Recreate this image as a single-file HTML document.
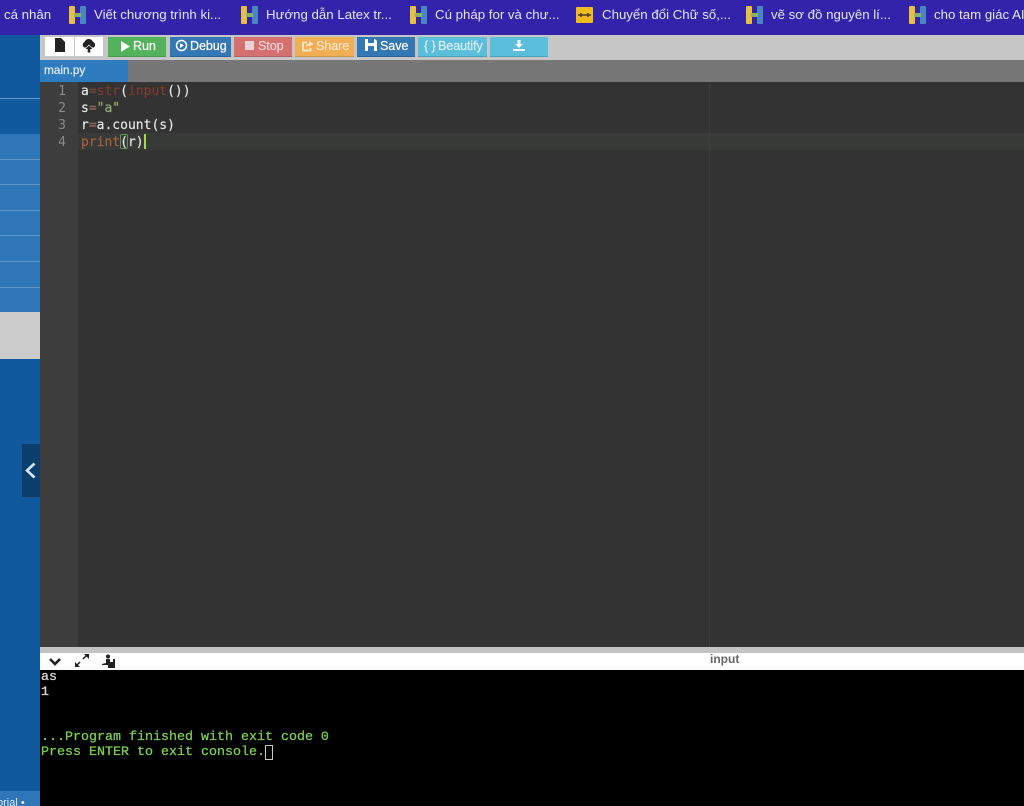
<!DOCTYPE html>
<html><head><meta charset="utf-8">
<style>
html,body{margin:0;padding:0;width:1024px;height:806px;overflow:hidden;background:#333;font-family:"Liberation Sans","Noto Sans CJK SC",sans-serif}
div,span,svg{position:absolute;box-sizing:border-box;white-space:nowrap}
#w{left:0;top:0;width:1024px;height:806px;overflow:hidden;filter:blur(.35px)}
.bm{top:6px;line-height:18px;color:#e6e4f6;font-family:"Liberation Sans",sans-serif;font-size:13.25px}
.btn{top:37px;height:20px;color:#fff;font-size:12.6px;line-height:18px;text-align:center;border-bottom:1px solid rgba(0,0,0,.15);letter-spacing:-.1px;-webkit-text-stroke:.2px currentColor}
.nav{left:0;width:40px;height:1px;background:#5c96cc}
.code{left:81px;font:13px/17px "DejaVu Sans Mono","Liberation Mono",monospace;color:#e8e8e8;-webkit-text-stroke:.15px currentColor}
.ln{left:40px;width:26px;text-align:right;font:13px/17px "DejaVu Sans Mono","Liberation Mono",monospace;color:#8a8a8a}
.con{left:41px;font:13.33px/15px "Liberation Mono",monospace;-webkit-text-stroke:.3px currentColor}
</style></head><body><div id="w">
<!-- bookmarks bar -->
<div style="left:0;top:0;width:1024px;height:35px;background:#3322aa"></div>
<span class="bm" style="left:4px">cá nhân</span>
<svg style="left:69px;top:6px" width="17" height="18" viewBox="0 0 17 18"><rect x="0" y="0" width="6" height="18" rx="1" fill="#e8c040"/><rect x="11" y="0" width="6" height="18" rx="1" fill="#4a86c0"/><rect x="5" y="7" width="7" height="4" fill="#8ab070"/></svg>
<span class="bm" style="left:94px">Viết chương trình ki...</span>
<svg style="left:241px;top:6px" width="17" height="18" viewBox="0 0 17 18"><rect x="0" y="0" width="6" height="18" rx="1" fill="#e8c040"/><rect x="11" y="0" width="6" height="18" rx="1" fill="#4a86c0"/><rect x="5" y="7" width="7" height="4" fill="#8ab070"/></svg>
<span class="bm" style="left:266px">Hướng dẫn Latex tr...</span>
<svg style="left:410px;top:6px" width="17" height="18" viewBox="0 0 17 18"><rect x="0" y="0" width="6" height="18" rx="1" fill="#e8c040"/><rect x="11" y="0" width="6" height="18" rx="1" fill="#4a86c0"/><rect x="5" y="7" width="7" height="4" fill="#8ab070"/></svg>
<span class="bm" style="left:435px">Cú pháp for và chư...</span>
<svg style="left:576px;top:7px" width="17" height="16" viewBox="0 0 17 16"><rect width="17" height="16" rx="1" fill="#f2bd1c"/><path d="M2 8h13M5 6v4M12 6v4" stroke="#4a3a20" stroke-width="1.6" fill="none"/></svg>
<span class="bm" style="left:602px">Chuyển đổi Chữ số,...</span>
<svg style="left:746px;top:6px" width="17" height="18" viewBox="0 0 17 18"><rect x="0" y="0" width="6" height="18" rx="1" fill="#e8c040"/><rect x="11" y="0" width="6" height="18" rx="1" fill="#4a86c0"/><rect x="5" y="7" width="7" height="4" fill="#8ab070"/></svg>
<span class="bm" style="left:771px">vẽ sơ đồ nguyên lí...</span>
<svg style="left:909px;top:6px" width="17" height="18" viewBox="0 0 17 18"><rect x="0" y="0" width="6" height="18" rx="1" fill="#e8c040"/><rect x="11" y="0" width="6" height="18" rx="1" fill="#4a86c0"/><rect x="5" y="7" width="7" height="4" fill="#8ab070"/></svg>
<span class="bm" style="left:934px">cho tam giác AI</span>

<!-- left sidebar -->
<div style="left:0;top:35px;width:40px;height:771px;background:#10599c"></div>
<div style="left:0;top:134px;width:40px;height:178px;background:#2f76b8"></div>
<div class="nav" style="top:98px"></div>
<div class="nav" style="top:159px"></div>
<div class="nav" style="top:184px"></div>
<div class="nav" style="top:210px"></div>
<div class="nav" style="top:235px"></div>
<div class="nav" style="top:261px"></div>
<div class="nav" style="top:287px"></div>
<div style="left:0;top:312px;width:40px;height:47px;background:#cbcbcb"></div>
<div style="left:22px;top:444px;width:18px;height:53px;background:#0d3f6e"></div>
<svg style="left:24px;top:462px" width="13" height="17" viewBox="0 0 13 17"><path d="M10.5 1.500L3 8.500l7.500 7" stroke="#d5e6f5" stroke-width="2.600" fill="none"/></svg>
<div style="left:0;top:791px;width:40px;height:15px;background:#2f76b8"></div>
<span style="left:-3px;top:797px;font-size:11px;line-height:12px;color:#dfeaf5">orial •</span>

<!-- toolbar -->
<div style="left:40px;top:35px;width:984px;height:25px;background:#c6c6c6"></div>
<div style="left:45px;top:37px;width:29px;height:19px;background:#fff"></div>
<div style="left:75px;top:37px;width:28px;height:19px;background:#fff"></div>
<svg style="left:55px;top:38px" width="10" height="14" viewBox="0 0 10 14"><path d="M0 0h6l4 4v10H0z" fill="#222"/></svg>
<svg style="left:82px;top:38px" width="14" height="15" viewBox="0 0 14 15"><path d="M2.500 9.500a3 3 0 0 1 0-5.500 4.500 4.500 0 0 1 8.500 0 3 3 0 0 1 .5 5.500H9.800L7 6.500 4.200 9.500z" fill="#222"/><path d="M7 7.500l3.500 3.500H8.300v3.500H5.700V11H3.500z" fill="#222"/></svg>
<div class="btn" style="left:108px;width:58px;background:#53b35c"><svg style="left:12px;top:4px" width="11" height="11" viewBox="0 0 11 11"><path d="M1 0l9 5.500-9 5.500z" fill="#fff"/></svg><span style="left:25px;top:0">Run</span></div>
<div class="btn" style="left:170px;width:61px;background:#3377b4"><svg style="left:5px;top:2px" width="13" height="13" viewBox="0 0 13 13"><circle cx="6.500" cy="6.500" r="5" stroke="#fff" stroke-width="1.500" fill="none"/><path d="M5 4l4 2.500L5 9z" fill="#fff"/></svg><span style="left:20px;top:0">Debug</span></div>
<div class="btn" style="left:234px;width:58px;background:#d47070;color:#f0d0d0"><div style="left:11px;top:4px;width:9px;height:9px;background:#ecd2d2"></div><span style="left:24px;top:0">Stop</span></div>
<div class="btn" style="left:295px;width:59px;background:#f0ae55;color:#fae3c4"><svg style="left:6px;top:3px" width="13" height="12" viewBox="0 0 13 12"><path d="M9.500 8v2.500H2v-8h4" stroke="#fae3c4" stroke-width="2" fill="none"/><path d="M8 1l4.500 3L8 7V5.500C6.500 5.500 5.500 6.500 5 8c0-3 1-4.500 3-4.500z" fill="#fae3c4"/></svg><span style="left:21px;top:0">Share</span></div>
<div class="btn" style="left:357px;width:58px;background:#3377b4"><svg style="left:8px;top:2px" width="12" height="12" viewBox="0 0 12 12"><path d="M0 0h3v4h6V0h1l2 2v10H0zM3 7v5h6V7z" fill="#fff"/></svg><span style="left:23px;top:0">Save</span></div>
<div class="btn" style="left:418px;width:69px;background:#5bbfdc;color:#d8eef6"><span style="left:6px;top:0">{ }</span><span style="left:20px;top:0">Beautify</span></div>
<div class="btn" style="left:490px;width:58px;background:#5bbfdc"><svg style="left:23px;top:3px" width="12" height="11" viewBox="0 0 12 11"><path d="M4.500 0h3v4H10L6 8 2 4h2.500zM0 9h12v2H0z" fill="#f2fafd"/></svg></div>

<!-- tab bar -->
<div style="left:40px;top:60px;width:984px;height:22px;background:#777"></div>
<div style="left:40px;top:60px;width:88px;height:22px;background:#2f7bc0"></div>
<span style="left:44px;top:63px;font-size:11.8px;line-height:14px;color:#e3eef8;-webkit-text-stroke:.2px currentColor">main.py</span>

<!-- editor -->
<div style="left:40px;top:82px;width:984px;height:565px;background:#333"></div>
<div style="left:40px;top:82px;width:38px;height:565px;background:#3d3d3d"></div>
<div style="left:78px;top:133px;width:946px;height:17px;background:#383a38"></div>
<div style="left:709px;top:82px;width:1px;height:565px;background:#3d3d3d"></div>
<span class="ln" style="top:83px">1</span>
<span class="ln" style="top:100px">2</span>
<span class="ln" style="top:117px">3</span>
<span class="ln" style="top:134px">4</span>
<span class="code" style="top:83px">a<span style="position:static;color:#6f4a40">=</span><span style="position:static;color:#7d3a30">str</span>(<span style="position:static;color:#7d3a30">input</span>())</span>
<span class="code" style="top:100px">s<span style="position:static;color:#8a6a60">=</span><span style="position:static;color:#9aae78">"a"</span></span>
<span class="code" style="top:117px">r<span style="position:static;color:#8a6a60">=</span>a.count(s)</span>
<span class="code" style="top:134px"><span style="position:static;color:#a8623c">print</span>(r)</span>
<div style="left:120px;top:134px;width:8px;height:15px;border:1px solid #5f8f5f;border-radius:2px"></div>
<div style="left:144px;top:134px;width:2px;height:15px;background:#a8d848"></div>

<!-- io bar -->
<div style="left:40px;top:647px;width:984px;height:6px;background:#c4c4c4"></div>
<div style="left:40px;top:653px;width:984px;height:17px;background:#fff"></div>
<svg style="left:48px;top:657px" width="14" height="10" viewBox="0 0 14 10"><path d="M2 2l5 5 5-5" stroke="#222" stroke-width="2.600" fill="none"/></svg>
<svg style="left:75px;top:654px" width="14" height="13" viewBox="0 0 14 13"><path d="M8 5l4-4M1 12l4-4" stroke="#222" stroke-width="1.500"/><path d="M9 0h5v5zM0 8v5h5z" fill="#222"/></svg>
<svg style="left:102px;top:654px" width="13" height="14" viewBox="0 0 13 14"><circle cx="6" cy="2.500" r="2" fill="#222"/><path d="M4 5h4v3h3V5h2v9H6v-3H0v-1l4-1z" fill="#222"/></svg>
<span style="left:710px;top:652px;font-size:12px;line-height:14px;font-weight:bold;color:#666">input</span>

<!-- console -->
<div style="left:40px;top:670px;width:984px;height:136px;background:#000"></div>
<span class="con" style="top:670px;color:#d8d8d8">as</span>
<span class="con" style="top:685px;color:#d8d8d8">1</span>
<span class="con" style="top:730px;color:#7ccc50">...Program finished with exit code 0</span>
<span class="con" style="top:745px;color:#7ccc50">Press ENTER to exit console.</span>
<div style="left:265px;top:745px;width:8px;height:15px;border:1px solid #c8c8c8"></div>
</div></body></html>
